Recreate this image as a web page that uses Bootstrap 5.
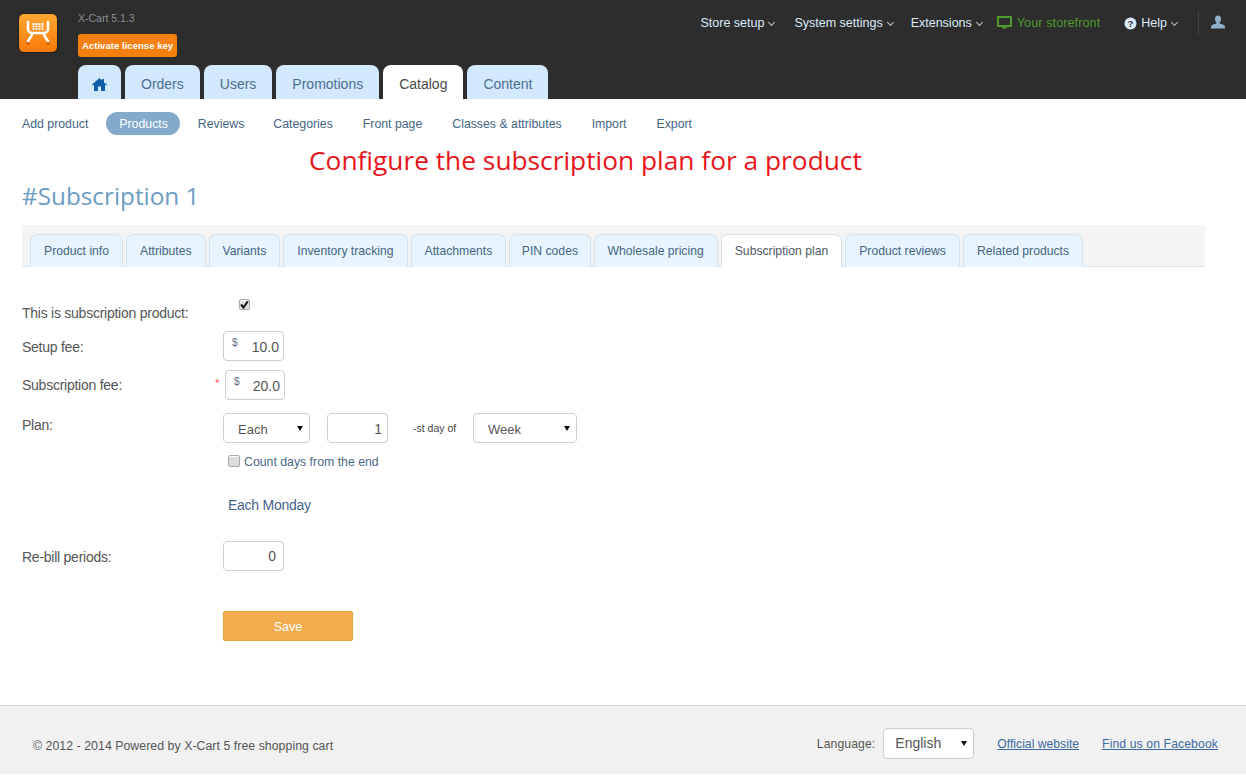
<!DOCTYPE html>
<html lang="en">
<head>
<meta charset="utf-8">
<title>X-Cart</title>
<link href="https://cdn.jsdelivr.net/npm/bootstrap@5.3.0/dist/css/bootstrap.min.css" rel="stylesheet">
<style>
html,body{height:775px;overflow:hidden}
body{font-family:"Liberation Sans",Arial,sans-serif;font-size:12.5px;color:#456583;background:#fff}
a{text-decoration:none}
.xc-head{height:99px;background:#2d2d2d;padding-left:18px}
.xc-logo{width:40px;height:40px;margin-top:13px;border-radius:6px;background:linear-gradient(#ffa733,#f97a0a);border:1px solid #1d1d1d;flex:none}
.xc-brandcol{margin-left:20px;width:540px}
.xc-ver{font-size:10.5px;color:#8a8f94;margin-top:11px;line-height:14px}
.xc-key{display:inline-block;align-self:flex-start;margin-top:9px;height:23px;line-height:23px;padding:0 0 0 4px;font-size:9.6px;font-weight:700;color:#fff;background:#f5800f;border-radius:3px;width:99px;white-space:nowrap}
.xc-main{margin-top:auto;gap:4px}
.xc-main a{display:flex;align-items:center;justify-content:center;height:34px;padding:5px 16px 0;background:#d2e8fd;color:#4c6f96;font-size:14px;border-radius:8px 8px 0 0}
.xc-main a.xc-on{background:#fff;color:#4a4a4a}
.xc-main a.xc-home{width:43px;padding:5px 0 0}
.xc-top{margin-left:auto;padding-top:14px;padding-right:21px;height:36px;color:#dcebfa;font-size:12.5px}
.xc-item{white-space:nowrap}
.xc-gap-a{margin-left:19px}
.xc-gap-b{margin-left:17px}
.xc-gap-c{margin-left:14px}
.xc-gap-d{margin-left:24px}
.xc-gap-e{margin-left:20px}
.xc-gap-f{margin-left:12px;margin-top:1px}
.xc-caret{display:inline-block;width:5px;height:5px;border-right:1px solid #b8c4cf;border-bottom:1px solid #b8c4cf;transform:rotate(45deg);margin:0 1px 2px 5px}
.xc-green{color:#4f9a2c;letter-spacing:.13px}
.xc-mon-ico{margin-right:5px}
.xc-sep{width:1px;height:25px;background:#3f444a;margin-top:-4px}
.xc-sub{height:49px;padding-left:22px;font-size:12.3px;margin-bottom:-1px}
.xc-sub a{color:#456583;white-space:nowrap;padding-top:2px}
.xc-sub a.xc-pill{background:#83a9cb;color:#fff;border-radius:12px;padding:4px 12px 2px 13px;height:23px;line-height:17px;margin-left:18px}
.xc-gap-g{margin-left:18px}
.xc-gap-h{margin-left:30px}
.xc-gap-i{margin-left:29px}
.xc-note{font-family:"Open Sans",sans-serif;font-size:26.3px;color:#e8141a;line-height:26px;padding-left:309px}
.xc-title{font-family:"Open Sans",sans-serif;font-size:24.3px;color:#6b9cc2;line-height:34px;margin:6px 0 0 22px;font-weight:400}
.xc-tabs{margin:12px 41px 0 22px;height:42px;background:#f4f4f4;border-bottom:1px solid #d5e4ee;padding:9px 0 0 8px;gap:3px}
.xc-tabs a{height:33px;display:flex;align-items:center;padding:0 13px;font-size:12.2px;color:#456583;background:#e8f5fe;border:1px solid #d3e2ec;border-bottom:0;border-radius:7px 7px 0 0;white-space:nowrap}
.xc-tabs a.xc-on{background:#fff;color:#4f5a63;height:33px;margin-bottom:-1px}
.xc-tabs a.xc-narrow{padding:0 11.5px}
.xc-form{padding-left:22px}
.xc-lab{width:201px;color:#555;font-size:14px;letter-spacing:-.25px;flex:none}
.xc-lab-low{padding-top:2px}
.xc-in{height:30px;border:1px solid #ccc;border-radius:4px;background:#fff;font-size:14px;color:#555;text-align:right;padding:5px 4px 0 0;font-family:inherit;box-sizing:border-box;width:61px;position:relative}
.xc-in-one{padding-right:5px}
.xc-in-zero{padding-right:7px;padding-top:4px}
.xc-dollar{position:absolute;left:8px;top:3px;font-size:10px;color:#5a6a80}
.xc-sel{appearance:none;-webkit-appearance:none;height:30px;border:1px solid #ccc;border-radius:4px;background:#fff url("data:image/svg+xml,%3Csvg xmlns='http://www.w3.org/2000/svg' width='6' height='5'%3E%3Cpath d='M0 0h6L3 5z' fill='%23111'/%3E%3C/svg%3E") no-repeat right 6px center;padding:3px 0 0 14px;font-size:13px;color:#555;font-family:inherit}
.xc-chk{appearance:none;-webkit-appearance:none;flex:none;background:#dcdcdc;border:1px solid #aaa;border-radius:2px;margin:0;box-shadow:inset 0 1px 1px #fff}
.xc-chk:checked{background:#dcdcdc url("data:image/svg+xml,%3Csvg xmlns='http://www.w3.org/2000/svg' width='9' height='9'%3E%3Cpath d='M1 4.500l2.500 3L8 1' fill='none' stroke='%23111' stroke-width='2'/%3E%3C/svg%3E") no-repeat center}
.xc-chk-a{width:11px;height:11px;margin:-4px 0 0 16px}
.xc-chk-b{width:12px;height:12px;margin:-3px 4px 0 0}
.xc-btn{width:130px;height:30px;background:#f3ad4e;color:#fff;border:1px solid #e8a33f;border-radius:2px;font-size:12.5px;font-family:inherit;padding:2px 0 0;margin-left:201px}
.xc-foot{position:absolute;left:0;right:0;top:705px;height:69px;background:#f1f1f1;border-top:1px solid #d2d2d2;padding:8px 28px 0 33px;font-size:12.2px;color:#555}
.xc-foot a{color:#3e6aa3;text-decoration:underline}
.xc-copy{padding-top:4px;font-size:12.3px;letter-spacing:.05px}
.xc-langlab{margin-right:8px;letter-spacing:.1px}
.xc-foot .xc-langsel{width:91px;height:31px;font-size:14px;padding:0 0 0 11px;margin-top:-1px}
.xc-fb{margin-left:23px;letter-spacing:.11px}
.xc-off{margin-left:23px}
.xc-r1{padding-top:36px;height:64px}
.xc-r2{height:30px}
.xc-r3{height:30px;margin-top:9px}
.xc-lab3{width:203px}
.xc-ast{color:#f55;font-size:11px;margin-right:6px}
.xc-in3{width:60px}
.xc-r4{margin-top:13px;height:30px}
.xc-lab4{padding-top:2px}
.xc-sel1{width:87px}
.xc-sel2{width:104px}
.xc-in4{margin-left:17px}
.xc-st{margin-left:25px;width:60px;font-size:10.5px;color:#444;padding-top:2px}
.xc-r5{margin:10px 0 0 206px;height:18px;color:#4d6a86;font-size:12.3px}
.xc-mon{margin:25px 0 0 206px;line-height:18px;font-size:14px;color:#44648a;letter-spacing:-.25px}
.xc-r6{height:30px;margin-top:27px}
.xc-r7{margin-top:40px}
</style>
</head>
<body>
<header class="xc-head d-flex">
  <div class="xc-logo d-flex align-items-center justify-content-center">
    <svg width="28" height="26" viewBox="0 0 28 26" fill="none" stroke="#fff" stroke-width="2.600" stroke-linecap="round" stroke-linejoin="round"><circle cx="4" cy="23.500" r="1.600" fill="#c75f08" stroke="none"/><circle cx="24" cy="23.500" r="1.600" fill="#c75f08" stroke="none"/><path d="M4 2v7c0 2 2 4 4.500 4h11c2.500 0 4.500-2 4.500-4V2M8.500 13c-.5 3-2.500 5-4.500 8M19.500 13c.5 3 2.500 5 4.500 8"/><path d="M8.500 4h11M8.500 6.400h11M8.500 8.800h11" stroke-width="1.800" stroke-dasharray="2 1" stroke-linecap="butt"/></svg>
  </div>
  <div class="xc-brandcol d-flex flex-column flex-shrink-0">
    <div class="xc-ver">X-Cart 5.1.3</div>
    <a class="xc-key" href="#">Activate license key</a>
    <nav class="xc-main d-flex">
      <a class="xc-home" href="#" aria-label="Home"><svg width="15" height="13" viewBox="0 0 15 13"><path fill="#0f5fa8" d="M7.500 0 0 6.600l.9 1L2 6.700V13h4V8.500h3V13h4V6.700l1.100.9.9-1L12 4.400V1h-2v1.600z"/></svg></a>
      <a href="#">Orders</a><a href="#">Users</a><a href="#">Promotions</a><a class="xc-on" href="#">Catalog</a><a href="#">Content</a>
    </nav>
  </div>
  <div class="xc-top d-flex align-items-start">
    <span class="xc-item">Store setup<i class="xc-caret"></i></span>
    <span class="xc-item xc-gap-a">System settings<i class="xc-caret"></i></span>
    <span class="xc-item xc-gap-b">Extensions<i class="xc-caret"></i></span>
    <span class="xc-item xc-green xc-gap-c d-flex align-items-center"><svg class="xc-mon-ico" width="15" height="14" viewBox="0 0 15 14"><path fill="#4f9a2c" fill-rule="evenodd" d="M0 0h15v11h-5v1.500H5V11H0zM2 2v7h11V2z"/></svg><span>Your storefront</span></span>
    <span class="xc-item xc-gap-d d-flex align-items-center"><svg class="me-1" width="13" height="13" viewBox="0 0 13 13"><circle cx="6.500" cy="6.500" r="6" fill="#dcebfa"/><text x="6.500" y="10" text-anchor="middle" font-size="9.500" font-weight="700" font-family="Liberation Sans" fill="#2d2d2d">?</text></svg>Help<i class="xc-caret"></i></span>
    <span class="xc-sep xc-gap-e"></span>
    <svg class="xc-gap-f" width="14" height="14" viewBox="0 0 15 14"><path fill="#8fb0cc" d="M7.500 0c2.200 0 3.300 1.700 3.300 3.800 0 1.500-.7 3-1.600 3.700v1.200c2 .6 5.300 1.400 5.800 3V14H0v-2.300c.5-1.600 3.800-2.400 5.800-3V7.500C4.900 6.800 4.200 5.300 4.200 3.800 4.200 1.700 5.300 0 7.500 0z"/></svg>
  </div>
</header>

<nav class="xc-sub d-flex align-items-center">
  <a href="#">Add product</a>
  <a class="xc-pill" href="#">Products</a>
  <a class="xc-gap-g" href="#">Reviews</a>
  <a class="xc-gap-i" href="#">Categories</a>
  <a class="xc-gap-h" href="#">Front page</a>
  <a class="xc-gap-h" href="#">Classes &amp; attributes</a>
  <a class="xc-gap-h" href="#">Import</a>
  <a class="xc-gap-h" href="#">Export</a>
</nav>

<div class="xc-note">Configure the subscription plan for a product</div>
<h1 class="xc-title">#Subscription 1</h1>

<div class="xc-tabs d-flex">
  <a href="#">Product info</a><a href="#">Attributes</a><a href="#">Variants</a><a href="#">Inventory tracking</a><a href="#">Attachments</a><a class="xc-narrow" href="#">PIN codes</a><a href="#">Wholesale pricing</a><a class="xc-on" href="#">Subscription plan</a><a href="#">Product reviews</a><a href="#">Related products</a>
</div>

<main class="xc-form">
  <div class="d-flex xc-r1">
    <div class="xc-lab">This is subscription product:</div>
    <input type="checkbox" checked class="xc-chk xc-chk-a" aria-label="This is subscription product">
  </div>
  <div class="d-flex align-items-center xc-r2">
    <div class="xc-lab xc-lab-low">Setup fee:</div>
    <div class="xc-in"><span class="xc-dollar">$</span>10.0</div>
  </div>
  <div class="d-flex align-items-center xc-r3">
    <div class="xc-lab xc-lab3 d-flex justify-content-between">Subscription fee:<span class="xc-ast">*</span></div>
    <div class="xc-in xc-in3"><span class="xc-dollar">$</span>20.0</div>
  </div>
  <div class="d-flex xc-r4">
    <div class="xc-lab xc-lab4">Plan:</div>
    <select class="xc-sel xc-sel1" aria-label="Period"><option>Each</option></select>
    <div class="xc-in xc-in4 xc-in-one">1</div>
    <span class="d-flex align-items-center xc-st">-st day of</span>
    <select class="xc-sel xc-sel2" aria-label="Unit"><option>Week</option></select>
  </div>
  <div class="d-flex align-items-center xc-r5">
    <input type="checkbox" class="xc-chk xc-chk-b" aria-label="Count days from the end"><span>Count days from the end</span>
  </div>
  <div class="xc-mon">Each Monday</div>
  <div class="d-flex align-items-center xc-r6">
    <div class="xc-lab xc-lab-low">Re-bill periods:</div>
    <div class="xc-in xc-in-zero">0</div>
  </div>
  <div class="xc-r7"><button type="button" class="xc-btn">Save</button></div>
</main>

<footer class="xc-foot d-flex align-items-center">
  <span class="xc-copy">© 2012 - 2014 Powered by X-Cart 5 free shopping cart</span>
  <span class="ms-auto xc-langlab">Language:</span>
  <select class="xc-sel xc-langsel" aria-label="Language"><option>English</option></select>
  <a class="xc-off" href="#">Official website</a>
  <a class="xc-fb" href="#">Find us on Facebook</a>
</footer>
</body>
</html>
